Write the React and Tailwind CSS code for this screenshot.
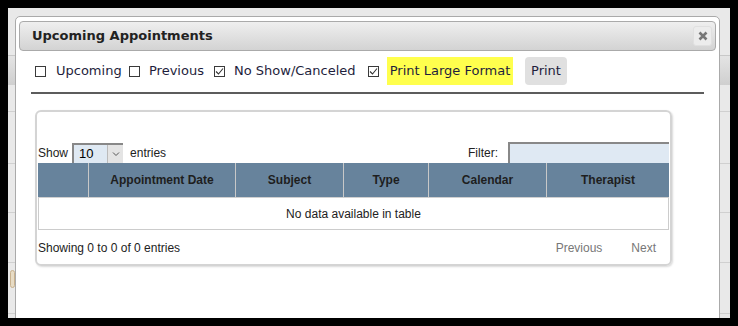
export default function App() {
  const Box = ({ checked }) => (
    <span className="inline-flex w-[11px] h-[11px] border border-[#3a3a3a] bg-white items-center justify-center shrink-0">
      {checked && (
        <svg width="9" height="9" viewBox="0 0 9 9">
          <path d="M1 4.5 L3.5 7 L8 1.5" fill="none" stroke="#333" strokeWidth="1.1" />
        </svg>
      )}
    </span>
  );
  const cols = [
    { w: "w-[50px]", t: "" },
    { w: "w-[147px]", t: "Appointment Date" },
    { w: "w-[108px]", t: "Subject" },
    { w: "w-[85px]", t: "Type" },
    { w: "w-[118px]", t: "Calendar" },
    { w: "flex-1", t: "Therapist" },
  ];
  return (
    <div className="w-[738px] h-[326px] bg-black pt-[8px] pl-[8px] pr-[8px] pb-[8px] overflow-hidden">
      <div className="relative w-full h-full bg-[#e9e9e9] overflow-hidden">
        <div className="absolute left-0 right-0 top-[47px] h-[30px] bg-gradient-to-b from-[#e4e4e4] to-[#cfcfcf] border-t border-[#c8c8c8]" />
        <div className="absolute left-0 right-0 top-[103px] border-t border-[#d0d0d0]" />
        <div className="absolute left-0 right-0 top-[155px] border-t border-[#d0d0d0]" />
        <div className="absolute left-0 right-0 top-[204px] border-t border-[#d0d0d0]" />
        <div className="absolute left-0 right-0 top-[254px] border-t border-[#d0d0d0]" />
        <div className="absolute left-[2px] top-[262px] w-[5px] h-[18px] rounded-sm border border-[#c9b28f] bg-[#e8dcc5]" />
        <div className="absolute left-0 right-0 top-[305px] border-t border-[#d0d0d0]" />
        <div className="absolute left-[7px] top-[8px] w-[705px] h-[330px] bg-white border border-[#aaa] rounded-[5px] pt-[4px] px-[3px] font-['DejaVu_Sans',sans-serif]">
          <div className="h-[30px] rounded-[4px] border border-[#aaa] bg-gradient-to-b from-[#efefef] to-[#d3d3d3] flex items-center pl-[12px] pr-[3px]">
            <span className="text-[13px] font-bold text-[#222] flex-1">Upcoming Appointments</span>
            <span className="w-[19px] h-[20px] rounded-[3px] bg-[#ececec] border border-[#e0e0e0] flex items-center justify-center">
              <svg width="10" height="10" viewBox="0 0 10 10">
                <path d="M1.5 1.5 L8.5 8.5 M8.5 1.5 L1.5 8.5" stroke="#777" strokeWidth="2.6" />
              </svg>
            </span>
          </div>
          <div className="flex items-center h-[28px] mt-[6px] pl-[16px] text-[13px] text-[#1e1e3c]">
            <div className="w-[94px] flex items-center shrink-0">
              <Box />
              <span className="ml-[10px] whitespace-nowrap">Upcoming</span>
            </div>
            <div className="w-[85px] flex items-center shrink-0">
              <Box />
              <span className="ml-[9px] whitespace-nowrap">Previous</span>
            </div>
            <div className="w-[154px] flex items-center shrink-0">
              <Box checked />
              <span className="ml-[9px] whitespace-nowrap">No Show/Canceled</span>
            </div>
            <Box checked />
            <span className="ml-[8px] w-[126px] h-[28px] bg-[#ffff4d] flex items-center justify-center whitespace-nowrap">Print Large Format</span>
            <span className="ml-[12px] w-[42px] h-[28px] bg-[#e0e0e0] rounded-[4px] flex items-center justify-center">Print</span>
          </div>
          <div className="ml-[12px] w-[673px] h-[2px] bg-[#5c5c5c] mt-[7px]" />
          <div className="ml-[16px] mt-[16px] w-[637px] h-[156px] border-2 border-[#d4d4d4] rounded-[6px] shadow-[1px_1px_2px_rgba(0,0,0,0.15)] pt-[29px] px-[1px] font-['Liberation_Sans',sans-serif] text-[12px] text-[#222]">
            <div className="flex items-end h-[22px]">
              <span className="mb-[1px]">Show</span>
              <span className="ml-[4px] flex h-[20px] w-[51px] border-l-2 border-t-2 border-[#888] bg-[#dfe9f3]">
                <span className="flex-1 pl-[5px] text-[13px] leading-[18px] text-black">10</span>
                <span className="w-[16px] bg-[#e4e4e4] border-l border-[#bbb] flex items-center justify-center">
                  <svg width="8" height="6" viewBox="0 0 8 6">
                    <path d="M1 1.5 L4 4.5 L7 1.5" fill="none" stroke="#555" strokeWidth="1" />
                  </svg>
                </span>
              </span>
              <span className="ml-[7px] mb-[1px]">entries</span>
              <span className="ml-auto mb-[1px]">Filter:</span>
              <span className="ml-[10px] w-[161px] h-[21px] border-l-2 border-t-2 border-[#888] bg-[#dfe9f3]" />
            </div>
            <div className="flex h-[35px] bg-[#67839c] border-b border-[#d0d0d0]">
              {cols.map((c, i) => (
                <div
                  key={i}
                  className={`${c.w} flex items-center justify-center font-bold text-[#1e1e1e] ${i > 0 ? "border-l border-[#c8c8c8]" : ""}`}
                >
                  {c.t}
                </div>
              ))}
            </div>
            <div className="h-[32px] flex items-center justify-center border-l border-r border-b border-[#ccc]">
              No data available in table
            </div>
            <div className="flex items-center h-[36px]">
              <span>Showing 0 to 0 of 0 entries</span>
              <span className="ml-auto text-[#777]">Previous</span>
              <span className="ml-[29px] mr-[13px] text-[#777]">Next</span>
            </div>
          </div>
        </div>
      </div>
    </div>
  );
}
